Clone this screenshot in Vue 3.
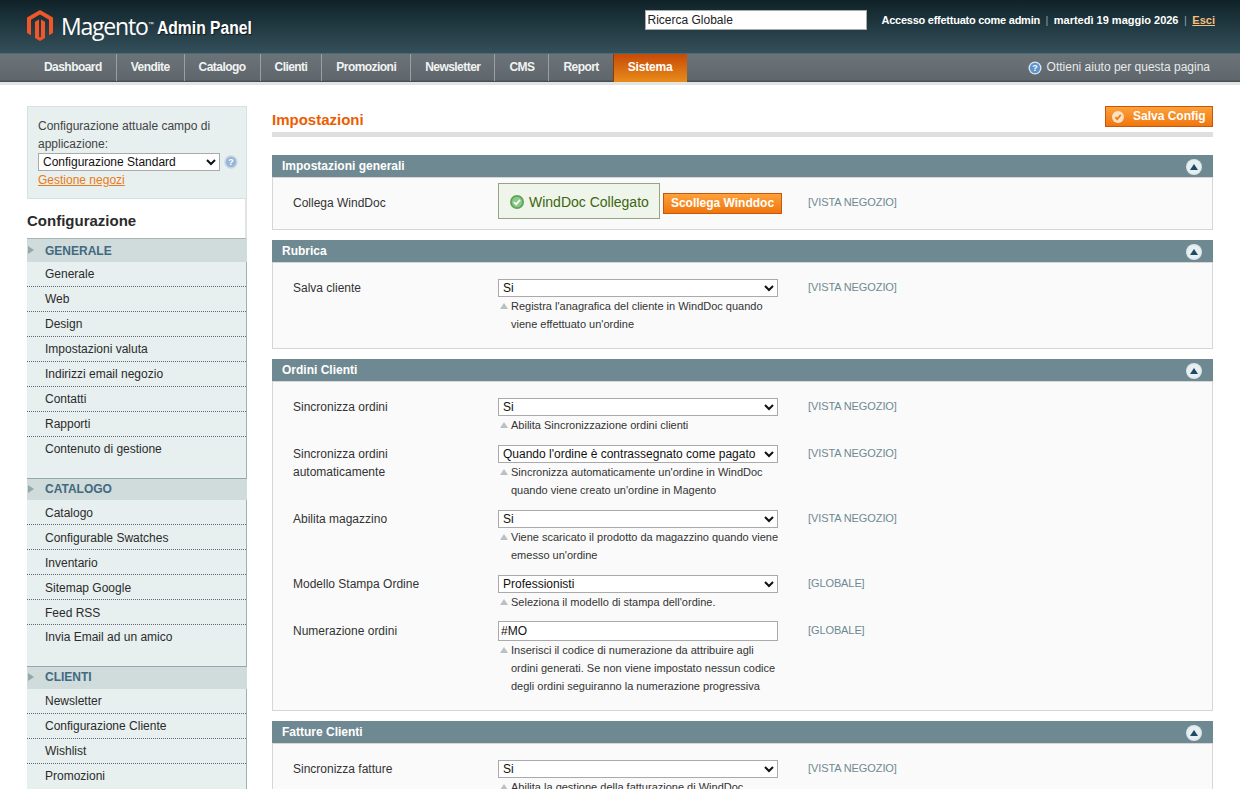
<script setup>
const navItems = ['Dashboard', 'Vendite', 'Catalogo', 'Clienti', 'Promozioni', 'Newsletter', 'CMS', 'Report']
const groups = [
  { title: 'Generale', items: ['Generale', 'Web', 'Design', 'Impostazioni valuta', 'Indirizzi email negozio', 'Contatti', 'Rapporti', 'Contenuto di gestione'] },
  { title: 'Catalogo', items: ['Catalogo', 'Configurable Swatches', 'Inventario', 'Sitemap Google', 'Feed RSS', 'Invia Email ad un amico'] },
  { title: 'Clienti', items: ['Newsletter', 'Configurazione Cliente', 'Wishlist', 'Promozioni'] }
]
const sections = [
  {
    title: 'Rubrica',
    rows: [
      { label: ['Salva cliente'], value: 'Si', scope: '[VISTA NEGOZIO]', hint: ["Registra l'anagrafica del cliente in WindDoc quando", "viene effettuato un'ordine"] }
    ]
  },
  {
    title: 'Ordini Clienti',
    rows: [
      { label: ['Sincronizza ordini'], value: 'Si', scope: '[VISTA NEGOZIO]', hint: ['Abilita Sincronizzazione ordini clienti'] },
      { label: ['Sincronizza ordini', 'automaticamente'], value: "Quando l'ordine è contrassegnato come pagato", scope: '[VISTA NEGOZIO]', hint: ["Sincronizza automaticamente un'ordine in WindDoc", "quando viene creato un'ordine in Magento"] },
      { label: ['Abilita magazzino'], value: 'Si', scope: '[VISTA NEGOZIO]', hint: ['Viene scaricato il prodotto da magazzino quando viene', "emesso un'ordine"] },
      { label: ['Modello Stampa Ordine'], value: 'Professionisti', scope: '[GLOBALE]', hint: ["Seleziona il modello di stampa dell'ordine."] },
      { label: ['Numerazione ordini'], input: '#MO', scope: '[GLOBALE]', hint: ['Inserisci il codice di numerazione da attribuire agli', 'ordini generati. Se non viene impostato nessun codice', 'degli ordini seguiranno la numerazione progressiva'] }
    ]
  },
  {
    title: 'Fatture Clienti',
    rows: [
      { label: ['Sincronizza fatture'], value: 'Si', scope: '[VISTA NEGOZIO]', hint: ['Abilita la gestione della fatturazione di WindDoc'] }
    ]
  }
]
</script>

<template>
  <div class="page">
    <header class="top">
      <div class="brand">
        <svg class="logo" viewBox="0 0 26 31" aria-hidden="true">
          <path fill="#f0562a" d="M13 0 26 7.500V23l-4 2.300V9.800L13 4.600 4 9.800v15.500L0 23V7.500z" />
          <path fill="#f0562a" d="M12 9.400v17.400l1 .6 1-.6V9.400l4 2.300v16.400L13 31l-5-2.900V11.700z" />
        </svg>
        <span class="word">Magento</span><span class="tm">™</span>
        <span class="panel">Admin Panel</span>
      </div>
      <div class="top-right">
        <input class="search" value="Ricerca Globale" />
        <div class="session">
          <span class="who">Accesso effettuato come admin</span><i>|</i><span>martedì 19 maggio 2026</span><i>|</i><a>Esci</a>
        </div>
      </div>
    </header>

    <nav class="nav">
      <a v-for="n in navItems" :key="n" class="nav-item">{{ n }}</a>
      <a class="nav-item active">Sistema</a>
      <span class="help">
        <svg class="help-icon" viewBox="0 0 14 14" aria-hidden="true">
          <circle cx="7" cy="7" r="6.500" fill="#dbe7f2" />
          <circle cx="7" cy="7" r="5.200" fill="#5f93c9" />
          <text x="7" y="10.300" text-anchor="middle" class="q">?</text>
        </svg>
        Ottieni aiuto per questa pagina
      </span>
    </nav>
    <div class="nav-rule"></div>

    <div class="body">
      <aside class="side">
        <div class="scope">
          <div>Configurazione attuale campo di applicazione:</div>
          <div class="scope-line">
            <select class="scope-select"><option>Configurazione Standard</option></select>
            <svg class="scope-help" viewBox="0 0 14 14" aria-hidden="true">
              <circle cx="7" cy="7" r="6.800" fill="#c8d7e6" />
              <circle cx="7" cy="7" r="5.200" fill="#9ab6d6" />
              <text x="7" y="10.300" text-anchor="middle" class="q">?</text>
            </svg>
          </div>
          <a class="stores">Gestione negozi</a>
        </div>
        <h3 class="side-title">Configurazione</h3>
        <section v-for="g in groups" :key="g.title" class="group">
          <div class="group-head"><span class="arrow"></span>{{ g.title }}</div>
          <ul class="group-list">
            <li v-for="it in g.items" :key="it">{{ it }}</li>
          </ul>
        </section>
      </aside>

      <main class="main">
        <div class="title-bar">
          <h3 class="title">Impostazioni</h3>
          <button class="save">
            <svg class="save-icon" viewBox="0 0 12 12" aria-hidden="true">
              <circle cx="6" cy="6" r="6" fill="#fde3c6" />
              <path d="M3.300 6.200 5.200 8.200 8.800 3.900" fill="none" stroke="#f07d14" stroke-width="1.800" />
            </svg>
            Salva Config
          </button>
        </div>

        <section class="box">
          <div class="box-head">
            <span>Impostazioni generali</span>
            <span class="toggle"><b></b></span>
          </div>
          <div class="box-body connect">
            <div class="label">Collega WindDoc</div>
            <div class="connect-value">
              <div class="ok">
                <svg class="ok-icon" viewBox="0 0 14 14" aria-hidden="true">
                  <circle cx="7" cy="7" r="7" fill="#5ba55a" />
                  <circle cx="7" cy="7" r="5.200" fill="#8cc98a" />
                  <path d="M4 7.200 6.200 9.300 10 4.900" fill="none" stroke="#fff" stroke-width="1.800" />
                </svg>
                WindDoc Collegato
              </div>
              <button class="unlink">Scollega Winddoc</button>
            </div>
            <div class="scope-tag">[VISTA NEGOZIO]</div>
          </div>
        </section>

        <section v-for="s in sections" :key="s.title" class="box">
          <div class="box-head">
            <span>{{ s.title }}</span>
            <span class="toggle"><b></b></span>
          </div>
          <div class="box-body">
            <div v-for="r in s.rows" :key="r.label[0] + r.scope" class="row">
              <div class="label"><div v-for="l in r.label" :key="l">{{ l }}</div></div>
              <div class="value">
                <input v-if="r.input" class="text" :value="r.input" />
                <select v-else class="sel"><option>{{ r.value }}</option></select>
                <div class="hint">
                  <div v-for="h in r.hint" :key="h">{{ h }}</div>
                </div>
              </div>
              <div class="scope-tag">{{ r.scope }}</div>
            </div>
          </div>
        </section>
      </main>
    </div>
  </div>
</template>

<style>
html, body { margin: 0; background: #fff; overflow: hidden; }
</style>

<style scoped>
.page { width: 1240px; height: 789px; overflow: hidden; font: 12px/18px "Liberation Sans", Arial, sans-serif; color: #2f2f2f; background: #fff; }
.top { height: 53px; display: flex; justify-content: space-between; background: linear-gradient(#0f2228, #34505b); border-bottom: 1px solid #4b6a76; }
.brand { display: flex; align-items: flex-start; padding: 10px 0 0 27px; color: #fff; }
.logo { width: 26px; height: 31px; }
.word { font: 400 23px/30px "Open Sans", sans-serif; letter-spacing: -1.200px; margin-left: 8px; margin-top: 1px; }
.tm { font-size: 6px; line-height: 10px; margin-top: 9px; }
.panel { font: 700 18px/24px "Liberation Sans", sans-serif; margin: 6px 0 0 3px; text-shadow: 1px 1px 1px #0c1b20; transform: scaleX(.87); transform-origin: left center; }
.top-right { display: flex; align-items: flex-start; padding: 10px 25px 0 0; }
.search { width: 222px; height: 20px; box-sizing: border-box; padding: 0 2px; border: 1px solid #aaa; font: 12px "Liberation Sans", sans-serif; color: #222; background: #fff; margin-right: 15px; border-radius: 0; outline: 0; }
.session { color: #fff; font-size: 11px; font-weight: 700; line-height: 20px; }
.who { letter-spacing: -.25px; }
.session i { font-style: normal; font-weight: 400; color: #8ea2aa; margin: 0 5.500px; }
.session a { color: #f6c07c; text-decoration: underline; }
.nav { height: 28px; display: flex; align-items: stretch; padding-left: 30px; background: linear-gradient(#6c7479, #5f676c 92%, #3c474d); font-weight: 700; }
.nav-item { padding: 0 14px; line-height: 27px; letter-spacing: -.55px; color: #f1f3f3; border-right: 1px solid #9aa1a5; height: 27px; }
.nav-item.active { margin-left: -1px; padding: 0 14px; width: 45px; color: #fff; border-right: 0; border-left: 1px solid #8b3a0c; height: 28px; background: linear-gradient(#c64a07, #e98c1b); letter-spacing: -.2px; }
.help { margin-left: auto; padding-right: 30px; line-height: 27px; font-weight: 400; color: #e7eaec; display: flex; align-items: center; height: 27px; gap: 5px; }
.help-icon { width: 14px; height: 14px; }
.q { font: 700 9px "Liberation Sans", sans-serif; fill: #fff; }
.nav-rule { height: 3px; background: #e3e5e5; }
.body { display: flex; align-items: flex-start; padding: 21px 27px 0; }
.side { width: 220px; flex: none; margin-right: 25px; }
.scope { box-sizing: border-box; height: 93px; padding: 10px 8px 0 10px; background: #e7efef; border: 1px solid #d6e2e2; color: #444; }
.scope-line { display: flex; align-items: center; }
.scope-select { width: 183px; height: 18px; padding: 0; border: 1px solid #aaa; font: 12px "Liberation Sans", sans-serif; background: #fff; color: #111; border-radius: 0; }
.scope-help { width: 14px; height: 14px; margin-left: 4px; }
.stores { color: #eb7a14; text-decoration: underline; }
.side-title { margin: 0; height: 40px; box-sizing: border-box; font-size: 15px; line-height: 43px; font-weight: 700; color: #2b2b2b; border-right: 2px solid #dfe3e3; border-bottom: 1px solid #a6b4b4; background: #fff; }
.group-head { position: relative; height: 22.500px; line-height: 23px; padding-left: 18px; background: #d0dbdb; color: #41697f; font-size: 12px; font-weight: 700; text-transform: uppercase; box-shadow: inset 0 1px 0 #97a8a8; }
.group:first-of-type .group-head { box-shadow: none; line-height: 24px; }
.arrow { position: absolute; left: 1px; top: 7px; border-left: 6px solid #8fa9ad; border-top: 4px solid transparent; border-bottom: 4px solid transparent; }
.group-list { list-style: none; margin: 0; padding: 0 0 16px; background: #e7efef; border-right: 1px solid #9fb0b0; }
.group-list li { box-sizing: border-box; height: 25px; line-height: 24.500px; padding-left: 18px; color: #2b2b2b; border-bottom: 1px dotted #667; }
.group:nth-of-type(2) li { line-height: 26px; }
.group-list li:last-child { border-bottom: 0; line-height: 24.500px; }
.main { width: 941px; flex: none; }
.title-bar { position: relative; height: 26px; border-bottom: 5px solid #dfdfdf; margin-bottom: 18px; }
.title { margin: 0; font-size: 15px; line-height: 27px; color: #eb5e00; font-weight: 700; }
.save { position: absolute; right: 0; top: 0; width: 108px; height: 21px; box-sizing: border-box; display: flex; align-items: center; justify-content: flex-start; gap: 9px; padding: 0 0 2px 6px; border: 1px solid #c8560c; background: linear-gradient(#fda13a, #f0760e); color: #fff; font: 700 12px "Liberation Sans", sans-serif; }
.save-icon { width: 12px; height: 12px; margin-top: 2px; }
.box { margin-bottom: 10px; }
.box-head { display: flex; justify-content: space-between; align-items: center; height: 22px; padding: 0 11px 0 10px; background: #6f8992; color: #fff; font-weight: 700; }
.toggle { width: 16px; height: 16px; margin-top: 2px; border-radius: 50%; background: radial-gradient(#e6eff1 55%, #b4c8cd); display: flex; align-items: center; justify-content: center; }
.toggle b { border-left: 4px solid transparent; border-right: 4px solid transparent; border-bottom: 6px solid #1f4a60; margin-top: -1px; }
.box-body { box-sizing: border-box; padding: 16px 0 4px 20px; background: #fafafa; border: 1px solid #d6d6d6; }
.connect { display: flex; align-items: center; height: 53px; padding: 0 0 3px 20px; }
.connect .label { width: 205px; padding-top: 1px; }
.connect-value { width: 310px; display: flex; align-items: center; gap: 3px; }
.ok { box-sizing: border-box; width: 162px; height: 36px; margin-bottom: 2px; display: flex; align-items: center; gap: 5px; padding: 2px 0 0 11px; background: #eff5ea; border: 1px solid #95a486; color: #3d6611; font-size: 14px; }
.ok-icon { width: 14px; height: 14px; }
.unlink { box-sizing: border-box; width: 119px; height: 21px; margin-top: 3px; padding: 0 0 2px; border: 1px solid #c8560c; background: linear-gradient(#fda13a, #f0760e); color: #fff; font: 700 12px "Liberation Sans", sans-serif; }
.scope-tag { color: #6f8992; font-size: 11px; line-height: 16px; letter-spacing: -.1px; }
.row { display: flex; align-items: flex-start; padding-bottom: 11px; }
.label { width: 205px; flex: none; color: #333; }
.value { width: 280px; flex: none; margin-right: 30px; }
.sel { display: block; width: 280px; height: 18px; padding: 0; border: 1px solid #aaa; font: 12px "Liberation Sans", sans-serif; color: #111; background: #fff; border-radius: 0; }
.text { display: block; width: 280px; height: 20px; margin-top: -1px; box-sizing: border-box; padding: 0 2px; border: 1px solid #aaa; font: 12px "Liberation Sans", sans-serif; color: #111; background: #fff; border-radius: 0; outline: 0; }
.hint { position: relative; padding-left: 13px; font-size: 11px; line-height: 18px; color: #333; white-space: nowrap; }
.hint::before { content: ""; position: absolute; left: 2px; top: 6px; border-left: 4px solid transparent; border-right: 4px solid transparent; border-bottom: 6px solid #b8c2c2; }
</style>
